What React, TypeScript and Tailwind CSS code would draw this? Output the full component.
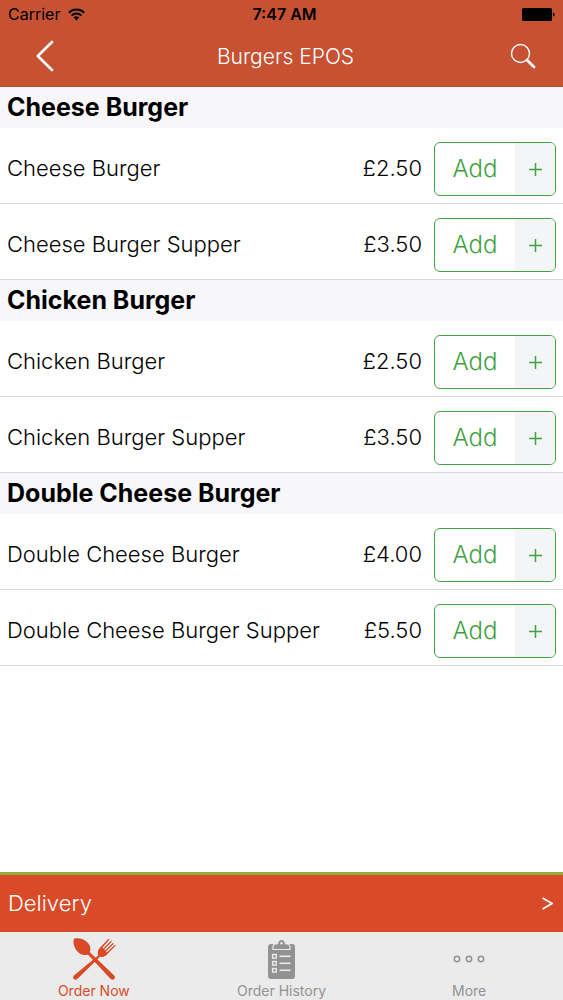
import type { ReactNode } from "react";

type Item = { name: string; price: string };
type Section = { title: string; items: Item[] };

const sections: Section[] = [
  {
    title: "Cheese Burger",
    items: [
      { name: "Cheese Burger", price: "£2.50" },
      { name: "Cheese Burger Supper", price: "£3.50" },
    ],
  },
  {
    title: "Chicken Burger",
    items: [
      { name: "Chicken Burger", price: "£2.50" },
      { name: "Chicken Burger Supper", price: "£3.50" },
    ],
  },
  {
    title: "Double Cheese Burger",
    items: [
      { name: "Double Cheese Burger", price: "£4.00" },
      { name: "Double Cheese Burger Supper", price: "£5.50" },
    ],
  },
];

function StatusBar() {
  return (
    <div className="grid h-[28px] grid-cols-3 items-center px-2 text-base text-black">
      <div className="flex items-center gap-2">
        <span>Carrier</span>
        <svg width="17" height="13" viewBox="0 0 17 13" fill="none" stroke="currentColor" strokeWidth="2" aria-hidden="true">
          <path d="M.8 4.7a11 11 0 0 1 15.4 0" />
          <path d="M3.6 7.6a7 7 0 0 1 9.8 0" />
          <path d="M8.5 12.4 5.7 9.6a4 4 0 0 1 5.6 0Z" fill="currentColor" stroke="none" />
        </svg>
      </div>
      <span className="pl-1.5 text-center font-semibold">7:47 AM</span>
      <svg className="justify-self-end" width="33" height="13" viewBox="0 0 33 13" fill="currentColor" aria-hidden="true">
        <rect width="30" height="13" rx="1.5" />
        <path d="M31 4.5c2 .6 2 3.4 0 4Z" />
      </svg>
    </div>
  );
}

function NavBar() {
  return (
    <div className="grid h-[58px] grid-cols-[80px_1fr_80px] items-center text-white">
      <button aria-label="Back" className="flex h-full items-center pb-0.5 pl-9">
        <svg width="18" height="32" viewBox="0 0 18 32" fill="none" stroke="currentColor" strokeWidth="2.6" strokeLinecap="round" strokeLinejoin="round">
          <path d="M16 2 1.8 16 16 30" />
        </svg>
      </button>
      <h1 className="pl-2 text-center text-[21px] font-[350]">Burgers EPOS</h1>
      <button aria-label="Search" className="flex h-full items-center justify-end pr-[27px] pb-0.5">
        <svg width="26" height="26" viewBox="0 0 26 26" fill="none" stroke="currentColor">
          <circle cx="10.5" cy="10.5" r="9" strokeWidth="1.4" />
          <path d="m17 17 7 7" strokeWidth="2.8" strokeLinecap="round" />
        </svg>
      </button>
    </div>
  );
}

function MenuRow({ item }: { item: Item }) {
  return (
    <li className="flex items-center border-b border-[#d9d9dc] pt-3.5 pr-[7px] pb-[7px] pl-[7px]">
      <span className="flex-1 pb-0.5 text-[22px] font-[350]">{item.name}</span>
      <span className="pb-0.5 text-[22px] font-[350]">{item.price}</span>
      <button
        aria-label={`Add ${item.name}`}
        className="ml-3 flex h-[54px] w-[122px] overflow-hidden rounded-md border border-[#43a047] text-[#3fa142]"
      >
        <span className="flex h-full flex-1 items-center justify-center text-2xl font-[350]">Add</span>
        <span className="flex h-full w-10 items-center justify-center bg-[#f4f5f6]">
          <svg width="13" height="13" viewBox="0 0 13 13" stroke="currentColor" strokeWidth="1.5" aria-hidden="true">
            <path d="M0 6.5h13M6.5 0v13" />
          </svg>
        </span>
      </button>
    </li>
  );
}

function CutleryIcon() {
  return (
    <svg width="44" height="42" viewBox="0 0 44 42" fill="currentColor" aria-hidden="true">
      {/* spoon */}
      <path d="M2 .8C7-.6 13 1.500 16.200 5.300c2.400 2.900 2.800 6 1.500 8.700L42.200 37.400c2.300 2.400-1 5.900-3.500 3.600L15.800 16.400c-3.400 1.500-7.200.5-9.800-2.300C2.500 10.400.400 5 2 .8Z" />
      {/* fork */}
      <path d="M26.200 17.500c-.9-2.600-.4-5.400 1.500-7.400L36.500.8l.9.800-7 8.200.9.800 7.700-7.900.9.900-7.700 7.900.9.900 7.900-7.600.8.900-7.800 7.800.8.900L43 6.700l.8.900-9 9.200c-1.900 1.900-4.100 2.600-6.700 1.900L5.300 41c-2.500 2.200-5.700-1.200-3.400-3.600Z" />
    </svg>
  );
}

function ClipboardIcon() {
  return (
    <svg width="27" height="40" viewBox="0 0 27 40" aria-hidden="true">
      <path d="M3 5h21a3 3 0 0 1 3 3v29a3 3 0 0 1-3 3H3a3 3 0 0 1-3-3V8a3 3 0 0 1 3-3Z" fill="currentColor" />
      <path
        d="M5 10.500V8c0-2.200 1.500-3.300 4.500-3.300C9.700 2.300 11 .4 13.500.4s3.800 1.900 4 4.300C20.500 4.700 22 5.800 22 8v2.500Z"
        fill="currentColor"
        stroke="#ebebeb"
        strokeWidth="1.2"
      />
      <circle cx="13.500" cy="4.300" r="1.300" fill="#ebebeb" />
      {[15.5, 22.5, 29.5].map((y) => (
        <g key={y} fill="none" stroke="#ebebeb">
          <rect x="4.600" y={y} width="3.600" height="3.600" strokeWidth="1.400" />
          <path d={`M11.500 ${y + 1.8}h11`} strokeWidth="1.600" />
        </g>
      ))}
    </svg>
  );
}

function MoreIcon() {
  return (
    <svg width="32" height="8" viewBox="0 0 32 8" fill="none" stroke="currentColor" strokeWidth="1.500" aria-hidden="true">
      <circle cx="4" cy="4" r="2.700" />
      <circle cx="16" cy="4" r="2.700" />
      <circle cx="28" cy="4" r="2.700" />
    </svg>
  );
}

type TabProps = { label: string; active?: boolean; children: ReactNode };

function Tab({ label, active, children }: TabProps) {
  return (
    <button
      aria-current={active ? "page" : undefined}
      className={`flex flex-col items-center pt-[5px] ${active ? "text-[#d94a29]" : "text-[#929292]"}`}
    >
      <span className="flex h-11 items-center">{children}</span>
      <span className="text-sm">{label}</span>
    </button>
  );
}

export default function App() {
  return (
    <div className="flex min-h-screen flex-col bg-white font-[Inter,sans-serif] text-black">
      <header className="border-b border-[#bd5136] bg-[#c65133]">
        <StatusBar />
        <NavBar />
      </header>

      <main className="flex-1">
        {sections.map((section) => (
          <section key={section.title}>
            <h2 className="flex h-[41px] items-center bg-[#f7f7fa] pl-[7px] text-[25px] font-bold">{section.title}</h2>
            <ul>
              {section.items.map((item) => (
                <MenuRow key={item.name} item={item} />
              ))}
            </ul>
          </section>
        ))}
      </main>

      <button className="flex h-[60px] items-center justify-between border-t-3 border-[#93ac3b] bg-[#d84a28] pr-2.5 pl-2 text-white">
        <span className="text-[22px] font-[350]">Delivery</span>
        <svg width="11" height="13" viewBox="0 0 11 13" fill="none" stroke="currentColor" strokeWidth="1.700" aria-hidden="true">
          <path d="m.5 1 9.500 5.500-9.500 5.500" />
        </svg>
      </button>

      <nav className="grid h-[68px] grid-cols-3 bg-[#ebebeb]">
        <Tab label="Order Now" active>
          <CutleryIcon />
        </Tab>
        <Tab label="Order History">
          <ClipboardIcon />
        </Tab>
        <Tab label="More">
          <MoreIcon />
        </Tab>
      </nav>
    </div>
  );
}
